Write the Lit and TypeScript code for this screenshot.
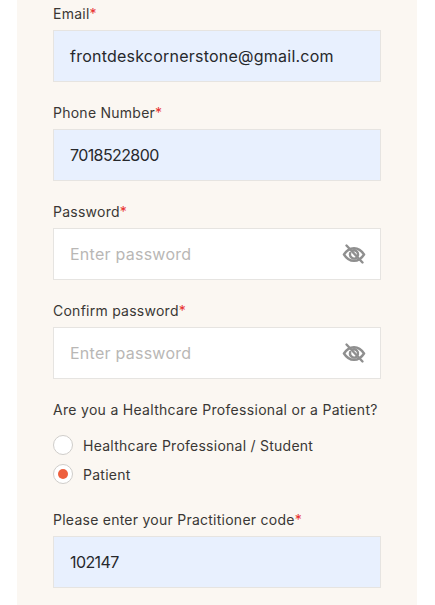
import { LitElement, html, css } from "lit";
import { customElement } from "lit/decorators.js";

const eye = html`<svg class="eye" viewBox="0 0 24 24" width="24" height="24" fill="none" stroke="#8f8f8f" stroke-width="2.4" stroke-linecap="round">
  <path d="M2 12.5C4.5 8.5 8 6.2 12 6.2s7.5 2.3 10 6.3c-2.5 4-6 6.3-10 6.3s-7.5-2.3-10-6.3z"/>
  <path d="M8.2 11a4.2 4.2 0 0 0 6.6 4.6M15.9 13.6A4.2 4.2 0 0 0 10.4 8.6"/>
  <path d="M4.5 3.5 20.5 20.5"/>
</svg>`;

@customElement("app-root")
export class AppRoot extends LitElement {
  static styles = css`
    :host { display: block; height: 605px; overflow: hidden; background: #fff; font-family: Inter, "Liberation Sans", sans-serif; color: #3a3735; }
    .panel { margin: 0 18px 0 17px; height: 605px; box-sizing: border-box; padding: 6px 36px 0; background: #fbf7f2; display: flex; flex-direction: column; }
    .field { display: flex; flex-direction: column; gap: 8px; margin-bottom: 23px; }
    .label { font-size: 14px; line-height: 16px; letter-spacing: 0.25px; }
    .req { color: #e8312f; }
    .input { height: 52px; box-sizing: border-box; border: 1px solid #e6e4e1; display: flex; align-items: center; justify-content: space-between; padding: 0 14px 0 16px; font-size: 16px; color: #26282c; }
    .filled { background: #e8f0fe; letter-spacing: 0.23px; }
    .digits { letter-spacing: -0.6px; }
    .empty { background: #fff; color: #b9b7b5; letter-spacing: 0.25px; }
    .eye { display: block; }
    .question { font-size: 14px; line-height: 16px; letter-spacing: 0.3px; margin-bottom: 17px; }
    .radio-row { display: flex; align-items: center; gap: 10px; height: 21px; margin-bottom: 9px; font-size: 14px; letter-spacing: 0.25px; }
    .radio { width: 20px; height: 20px; box-sizing: border-box; border-radius: 50%; border: 1px solid #cfcdca; background: #fff; display: flex; align-items: center; justify-content: center; }
    .dot { width: 10px; height: 10px; border-radius: 50%; background: #ee5f3d; }
    .radio-row.last { margin-bottom: 28px; }
  `;

  private field(label: string, value: string, kind: "filled" | "empty") {
    const digits = /^\d+$/.test(value);
    return html`<div class="field">
      <div class="label">${label}<span class="req">*</span></div>
      <div class="input ${kind}"><span class=${digits ? "digits" : ""}>${value}</span>${kind === "empty" ? eye : ""}</div>
    </div>`;
  }

  render() {
    return html`<div class="panel">
      ${this.field("Email", "frontdeskcornerstone@gmail.com", "filled")}
      ${this.field("Phone Number", "7018522800", "filled")}
      ${this.field("Password", "Enter password", "empty")}
      ${this.field("Confirm password", "Enter password", "empty")}
      <div class="question">Are you a Healthcare Professional or a Patient?</div>
      <div class="radio-row"><span class="radio"></span>Healthcare Professional / Student</div>
      <div class="radio-row last"><span class="radio"><span class="dot"></span></span>Patient</div>
      ${this.field("Please enter your Practitioner code", "102147", "filled")}
    </div>`;
  }
}
